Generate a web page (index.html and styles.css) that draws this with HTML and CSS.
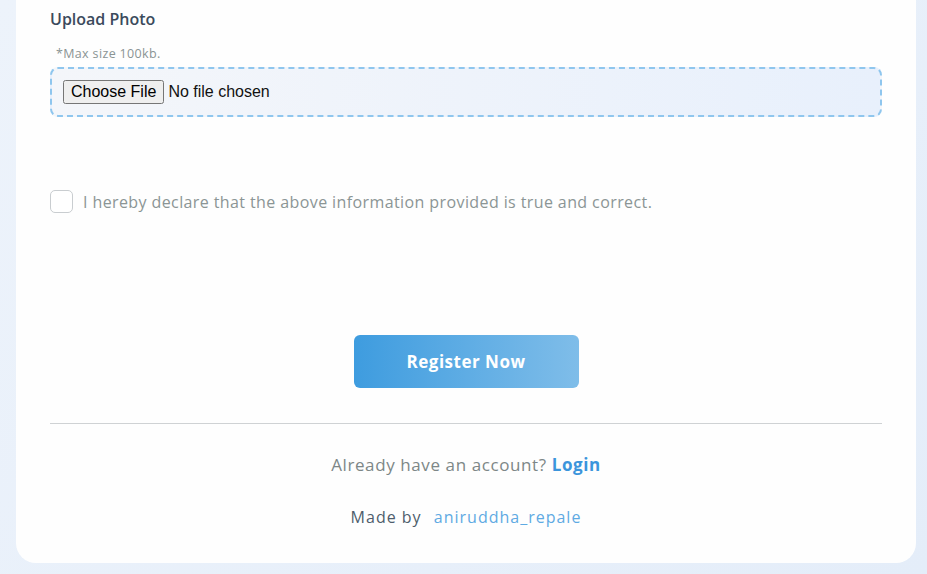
FILE: index.html
```html
<!DOCTYPE html>
<html lang="en">
<head>
<meta charset="utf-8">
<title>Register</title>
<link rel="stylesheet" href="styles.css">
</head>
<body>
<main class="card">
  <section class="field">
    <label class="field-label" for="photo">Upload Photo</label>
    <p class="hint">*Max size 100kb.</p>
    <div class="dropzone">
      <input type="file" id="photo" class="file-input">
    </div>
  </section>

  <label class="declare">
    <input type="checkbox" class="check">
    <span class="declare-text">I hereby declare that the above information provided is true and correct.</span>
  </label>

  <div class="actions">
    <button type="button" class="btn-register">Register Now</button>
  </div>

  <hr class="divider">

  <p class="login-line">Already have an account? <a href="#" class="login-link">Login</a></p>
  <p class="made-by">Made by <a href="#" class="author">aniruddha_repale</a></p>
</main>
</body>
</html>
```
FILE: styles.css
```css
html, body {
  margin: 0;
  padding: 0;
}
body {
  height: 574px;
  overflow: hidden;
  background: linear-gradient(135deg, #edf3fb 0%, #e4edf9 100%);
  padding: 0 11px 11px 16px;
  box-sizing: border-box;
  display: flex;
  flex-direction: column;
  justify-content: flex-end;
  font-family: "Open Sans", "Noto Sans", sans-serif;
}
.card {
  width: 900px;
  height: 563px;
  box-sizing: border-box;
  background: #fefefe;
  border-radius: 0 0 20px 20px;
  padding: 8px 34px 0 34px;
  display: flex;
  flex-direction: column;
}
.field {
  display: flex;
  flex-direction: column;
}
.field-label {
  font-size: 16px;
  font-weight: 600;
  color: #3b4a5c;
  line-height: 22px;
}
.hint {
  margin: 16px 0 5px 6px;
  font-size: 12.5px;
  color: #8a9494;
  line-height: 16px;
  letter-spacing: 0.35px;
}
.dropzone {
  height: 50px;
  box-sizing: border-box;
  border: 2px dashed #8fc6ee;
  border-radius: 8px;
  background: linear-gradient(90deg, #f4f6fa 0%, #e8f0fc 100%);
  display: flex;
  align-items: center;
  padding: 0 11px;
}
.file-input {
  font-family: "Liberation Sans", Arial, sans-serif;
  font-size: 16px;
  color: #111;
}
.declare {
  margin-top: 73px;
  display: flex;
  align-items: center;
  gap: 10px;
  cursor: pointer;
}
.check {
  appearance: none;
  -webkit-appearance: none;
  margin: 0;
  width: 23px;
  height: 23px;
  border: 1.5px solid #c9cdd0;
  border-radius: 5px;
  background: #fff;
  box-sizing: border-box;
}
.declare-text {
  font-size: 16px;
  color: #8b9595;
  letter-spacing: 0.4px;
}
.actions {
  margin-top: 122px;
  display: flex;
  justify-content: center;
}
.btn-register {
  width: 225px;
  height: 53px;
  border: none;
  border-radius: 6px;
  background: linear-gradient(90deg, #3e9cdf 0%, #7fbde9 100%);
  color: #fff;
  font-family: inherit;
  font-size: 17px;
  font-weight: 700;
  letter-spacing: 0.5px;
  cursor: pointer;
}
.divider {
  margin: 35px 0 0 0;
  border: none;
  border-top: 1px solid #cfd2d4;
}
.login-line {
  margin: 29px 0 0 0;
  text-align: center;
  font-size: 17px;
  color: #7d8787;
  line-height: 24px;
  letter-spacing: 0.6px;
}
.login-link {
  color: #3b95dc;
  font-weight: 700;
  text-decoration: none;
}
.made-by {
  margin: 28px 0 0 0;
  text-align: center;
  font-size: 16px;
  color: #4e5d6c;
  line-height: 24px;
  letter-spacing: 1px;
}
.author {
  color: #5eaae3;
  text-decoration: none;
  margin-left: 7px;
}
```
